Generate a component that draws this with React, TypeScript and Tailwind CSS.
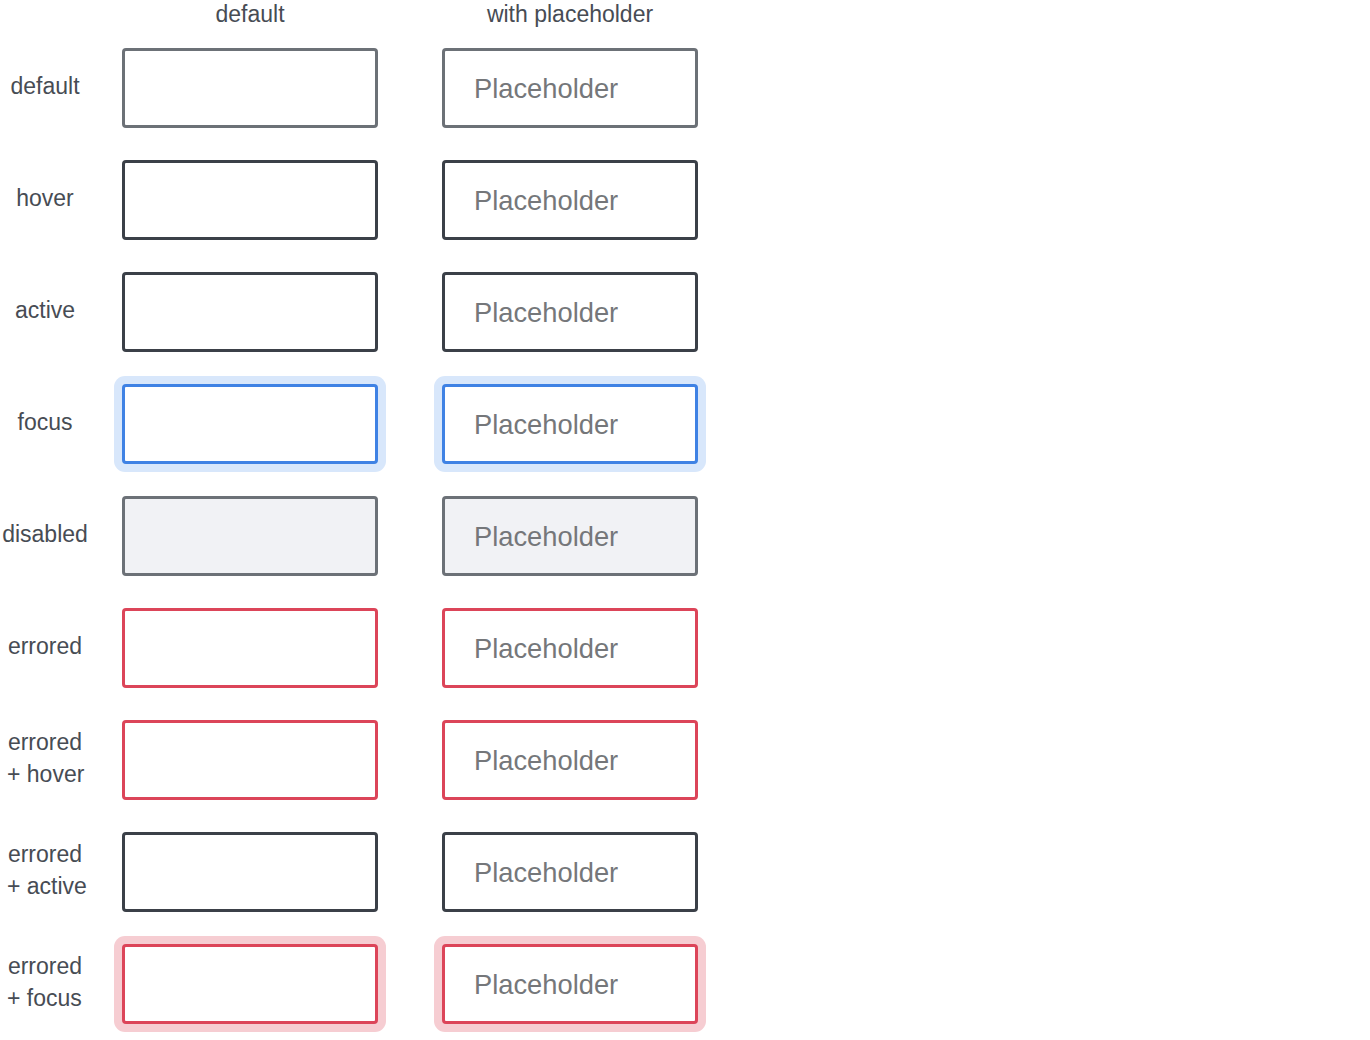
import React from "react";

type Variant = {
  label: string[];
  box: string;
  disabled?: boolean;
};

// One row per state; the border/ring classes are written out in full so Tailwind picks them up.
const ROWS: Variant[] = [
  { label: ["default"], box: "border-[#6c7177] bg-white" },
  { label: ["hover"], box: "border-[#3b4048] bg-white" },
  { label: ["active"], box: "border-[#3b4048] bg-white" },
  { label: ["focus"], box: "border-[#3f82e4] bg-white shadow-[0_0_0_8px_#d8e7fb]" },
  { label: ["disabled"], box: "border-[#6c7177] bg-[#f1f2f5]", disabled: true },
  { label: ["errored"], box: "border-[#dc4559] bg-white" },
  { label: ["errored", "+ hover"], box: "border-[#dc4559] bg-white" },
  { label: ["errored", "+ active"], box: "border-[#3b4048] bg-white" },
  { label: ["errored", "+ focus"], box: "border-[#dc4559] bg-white shadow-[0_0_0_8px_#f6cdd2]" },
];

function Field({ variant, placeholder }: { variant: Variant; placeholder?: string }) {
  return (
    <div className="flex h-[112px] w-[320px] items-center justify-center">
      <input
        readOnly
        tabIndex={-1}
        disabled={variant.disabled}
        placeholder={placeholder}
        className={`h-[80px] w-[256px] rounded-[4px] border-[3px] pt-[2px] pl-[29px] text-[27.3px] outline-none placeholder:text-[#75777a] ${variant.box}`}
      />
    </div>
  );
}

export default function App() {
  return (
    <div className="min-h-[1040px] w-full bg-white font-['Liberation_Sans',Arial,sans-serif] text-[23px] text-[#474c54]">
      <div className="flex h-[32px] items-start">
        <div className="w-[90px]" />
        <div className="w-[320px] text-center leading-[28px]">default</div>
        <div className="w-[320px] text-center leading-[28px]">with placeholder</div>
      </div>
      {ROWS.map((row) => (
        <div key={row.label.join(" ")} className="flex items-center">
          <div className="flex w-[90px] flex-col items-center pb-[4px] leading-[32px]">
            {row.label.map((line) => (
              <span key={line} className="self-start pl-[7px] first:self-center first:pl-0">
                {line}
              </span>
            ))}
          </div>
          <Field variant={row} />
          <Field variant={row} placeholder="Placeholder" />
        </div>
      ))}
    </div>
  );
}
